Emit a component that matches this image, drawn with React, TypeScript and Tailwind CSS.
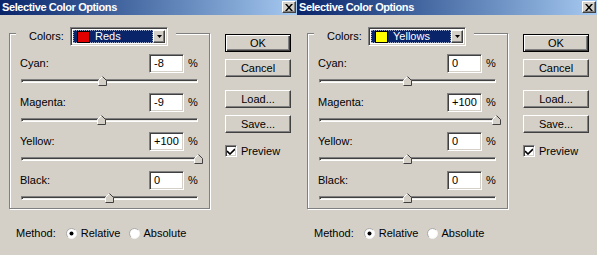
import React from "react";

type Row = { label: string; value: number; text: string };

const raised =
  "border border-t-white border-l-white border-r-[#404040] border-b-[#404040] shadow-[inset_-1px_-1px_0_#808080]";
const sunken =
  "border border-t-[#808080] border-l-[#808080] border-r-white border-b-white shadow-[inset_1px_1px_0_#404040,inset_-1px_-1px_0_#d4d0c8]";

function Thumb() {
  return (
    <svg width="9" height="10" viewBox="0 0 9 10">
      <polygon points="0.5,9.5 0.5,4.5 4.5,0.5 8.5,4.5 8.5,9.5" fill="#d4d0c8" />
      <polyline points="0.5,9.5 0.5,4.5 4.5,0.5" fill="none" stroke="#fff" />
      <polyline points="4.5,0.5 8.5,4.5 8.5,9.5 0.5,9.5" fill="none" stroke="#404040" />
    </svg>
  );
}

function Slider({ value }: { value: number }) {
  const left = ((value + 100) / 200) * 177 - 4.5;
  return (
    <div className="relative ml-[1px] flex h-[16px] w-[177px] items-center">
      <div className="h-[4px] w-full border border-t-[#808080] border-l-[#808080] border-r-white border-b-white bg-[#ecebe6] shadow-[inset_1px_1px_0_#404040]" />
      <div className="absolute top-[3px]" style={{ left }}>
        <Thumb />
      </div>
    </div>
  );
}

function CloseButton() {
  return (
    <div className={`mt-[1px] flex h-[12px] w-[14px] items-center justify-center bg-[#d4d0c8] ${raised}`}>
      <svg width="8" height="7" viewBox="0 0 8 7">
        <path d="M0 0h2l2 2.5L6 0h2L5 3.5 8 7H6L4 4.5 2 7H0l3-3.5z" fill="#000" />
      </svg>
    </div>
  );
}

function Radio({ on }: { on: boolean }) {
  return (
    <svg width="11" height="11" viewBox="0 0 11 11">
      <circle cx="5.5" cy="5.5" r="5" fill="#fff" />
      <path d="M1.96 9.04A5 5 0 0 1 9.04 1.96" fill="none" stroke="#a8a8a8" />
      <path d="M9.04 1.96A5 5 0 0 1 1.96 9.04" fill="none" stroke="#f4f4f4" />
      {on && <circle cx="5.5" cy="5.5" r="2" fill="#000" />}
    </svg>
  );
}

function Dialog({
  name,
  swatch,
  rows,
  width,
  pad,
}: {
  name: string;
  swatch: string;
  rows: Row[];
  width: string;
  pad: string;
}) {
  return (
    <div className={`flex h-full flex-col bg-[#d4d0c8] ${width}`}>
      <div className="flex h-[15px] items-start justify-between bg-gradient-to-r from-[#0a246a] to-[#a6caf0] pl-[2px] pr-[1px]">
        <span className="text-[11px] leading-[14px] font-bold tracking-[-0.4px] text-white">
          Selective Color Options
        </span>
        <CloseButton />
      </div>

      <div className={`flex ${pad}`}>
        <div className="flex flex-col">
          {/* group box */}
          <div className="relative mt-[18px] h-[176px] w-[201px] border border-[#808080] pt-[20px] pr-[11px] pl-[10px] shadow-[inset_1px_1px_0_#fff,1px_1px_0_#fff]">
            <div className="absolute top-[-7px] left-[6px] flex h-[19px] w-[160px] items-center bg-[#d4d0c8] pl-[13px]">
              <span className="w-[41px]">Colors:</span>
              <div className={`flex h-[19px] w-[98px] items-center bg-white p-[2px] ${sunken}`}>
                <div className="flex h-full flex-1 items-center border border-dotted border-[#9aa6c8] bg-[#0a246a]">
                  <div className="ml-[3px] h-[12px] w-[13px] border border-black" style={{ background: swatch }} />
                  <span className="ml-[5px] text-white">{name}</span>
                </div>
                <div className={`flex h-full w-[12px] items-center justify-center bg-[#d4d0c8] ${raised}`}>
                  <svg width="5" height="3" viewBox="0 0 5 3">
                    <path d="M0 0h5L2.5 3z" fill="#000" />
                  </svg>
                </div>
              </div>
            </div>

            <div className="flex flex-col gap-[4px]">
              {rows.map((r) => (
                <div key={r.label} className="flex flex-col">
                  <div className="flex h-[19px] items-center">
                    <span className="flex-1">{r.label}:</span>
                    <div className={`flex h-[19px] w-[35px] items-center bg-white pl-[4px] ${sunken}`}>{r.text}</div>
                    <span className="ml-[4px] w-[10px]">%</span>
                  </div>
                  <Slider value={r.value} />
                </div>
              ))}
            </div>
          </div>

          <div className="mt-[16px] flex h-[16px] items-center pl-[7px]">
            <span>Method:</span>
            <span className="ml-[10px] flex">
              <Radio on />
            </span>
            <span className="ml-[4px]">Relative</span>
            <span className="ml-[8px] flex">
              <Radio on={false} />
            </span>
            <span className="ml-[4px]">Absolute</span>
          </div>
        </div>

        <div className="ml-[15px] flex flex-col pt-[19px]">
          <div className="flex h-[18px] w-[66px] items-center justify-center border border-black shadow-[inset_1px_1px_0_#fff,inset_-1px_-1px_0_#404040,inset_-2px_-2px_0_#808080]">
            OK
          </div>
          <div className={`mt-[7px] flex h-[18px] w-[66px] items-center justify-center ${raised}`}>Cancel</div>
          <div className={`mt-[13px] flex h-[18px] w-[66px] items-center justify-center ${raised}`}>Load...</div>
          <div className={`mt-[7px] flex h-[18px] w-[66px] items-center justify-center ${raised}`}>Save...</div>
          <div className="mt-[12px] flex items-center">
            <div className={`flex h-[12px] w-[12px] items-center justify-center bg-white ${sunken}`}>
              <svg width="8" height="7" viewBox="0 0 8 7">
                <path d="M0 3l3 3 5-5" fill="none" stroke="#000" strokeWidth="1.6" />
              </svg>
            </div>
            <span className="ml-[4px]">Preview</span>
          </div>
        </div>
      </div>
    </div>
  );
}

export default function App() {
  return (
    <div className="flex h-[255px] w-[597px] overflow-hidden bg-[#d4d0c8] font-['Liberation_Sans',Arial,sans-serif] text-[11px] leading-none text-black">
      <Dialog
        name="Reds"
        swatch="#e00000"
        width="w-[297px]"
        pad="pl-[9px]"
        rows={[
          { label: "Cyan", value: -8, text: "-8" },
          { label: "Magenta", value: -9, text: "-9" },
          { label: "Yellow", value: 100, text: "+100" },
          { label: "Black", value: 0, text: "0" },
        ]}
      />
      <Dialog
        name="Yellows"
        swatch="#ffff00"
        width="w-[300px]"
        pad="pl-[10px]"
        rows={[
          { label: "Cyan", value: 0, text: "0" },
          { label: "Magenta", value: 100, text: "+100" },
          { label: "Yellow", value: 0, text: "0" },
          { label: "Black", value: 0, text: "0" },
        ]}
      />
    </div>
  );
}
